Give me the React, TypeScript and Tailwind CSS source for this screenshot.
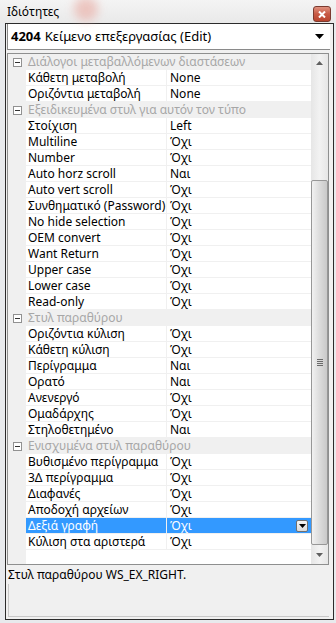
import React from "react";

type Row = { name: string; value?: string; group?: boolean; selected?: boolean };

const rows: Row[] = [
  { name: "Διάλογοι μεταβαλλόμενων διαστάσεων", group: true },
  { name: "Κάθετη μεταβολή", value: "None" },
  { name: "Οριζόντια μεταβολή", value: "None" },
  { name: "Εξειδικευμένα στυλ για αυτόν τον τύπο", group: true },
  { name: "Στοίχιση", value: "Left" },
  { name: "Multiline", value: "Όχι" },
  { name: "Number", value: "Όχι" },
  { name: "Auto horz scroll", value: "Ναι" },
  { name: "Auto vert scroll", value: "Όχι" },
  { name: "Συνθηματικό (Password)", value: "Όχι" },
  { name: "No hide selection", value: "Όχι" },
  { name: "OEM convert", value: "Όχι" },
  { name: "Want Return", value: "Όχι" },
  { name: "Upper case", value: "Όχι" },
  { name: "Lower case", value: "Όχι" },
  { name: "Read-only", value: "Όχι" },
  { name: "Στυλ παραθύρου", group: true },
  { name: "Οριζόντια κύλιση", value: "Όχι" },
  { name: "Κάθετη κύλιση", value: "Όχι" },
  { name: "Περίγραμμα", value: "Ναι" },
  { name: "Ορατό", value: "Ναι" },
  { name: "Ανενεργό", value: "Όχι" },
  { name: "Ομαδάρχης", value: "Όχι" },
  { name: "Στηλοθετημένο", value: "Ναι" },
  { name: "Ενισχυμένα στυλ παραθύρου", group: true },
  { name: "Βυθισμένο περίγραμμα", value: "Όχι" },
  { name: "3Δ περίγραμμα", value: "Όχι" },
  { name: "Διαφανές", value: "Όχι" },
  { name: "Αποδοχή αρχείων", value: "Όχι" },
  { name: "Δεξιά γραφή", value: "Όχι", selected: true },
  { name: "Κύλιση στα αριστερά", value: "Όχι" },
];

const font = { fontFamily: '"Noto Sans", "Liberation Sans", sans-serif' };

function MinusBox() {
  return (
    <div className="w-[9px] h-[9px] border border-[#919191] bg-white flex items-center justify-center">
      <div className="w-[5px] h-[1px] bg-[#333]" />
    </div>
  );
}

function GridRow({ r }: { r: Row }) {
  if (r.group) {
    return (
      <div className="h-[16px] flex items-center bg-[#f0f0f0] shrink-0">
        <div className="w-[18px] h-full flex items-center justify-center pl-[1px]">
          <MinusBox />
        </div>
        <div className="pl-[2px] text-[12px] leading-none text-[#a7a7a7] whitespace-nowrap">{r.name}</div>
      </div>
    );
  }
  return (
    <div className="h-[16px] flex shrink-0">
      <div className="w-[18px] h-full bg-[#f0f0f0]" />
      <div
        className={
          "w-[141px] h-full flex items-center pl-[2px] border-b border-r border-[#f0f0f0] text-[12px] leading-none whitespace-nowrap overflow-hidden " +
          (r.selected ? "bg-[#3399ff] text-white" : "bg-white text-black")
        }
      >
        {r.name}
      </div>
      <div
        className={
          "flex-1 h-full flex items-center pl-[3px] border-b border-[#f0f0f0] text-[12px] leading-none whitespace-nowrap " +
          (r.selected ? "bg-[#3399ff] text-white" : "bg-white text-black")
        }
      >
        <span className="flex-1">{r.value}</span>
        {r.selected && (
          <div className="mr-[3px] w-[12px] h-[12px] rounded-[2px] border border-[#707070] bg-gradient-to-b from-[#f6f6f6] to-[#dadada] flex items-center justify-center">
            <svg width="7" height="4" viewBox="0 0 7 4">
              <path d="M0 0 L7 0 L3.5 4 Z" fill="#000" />
            </svg>
          </div>
        )}
      </div>
    </div>
  );
}

export default function App() {
  return (
    <div
      className="w-[336px] h-[623px] bg-[#e8eaed] flex flex-col overflow-hidden relative"
      style={font}
    >
      {/* title bar */}
      <div className="h-[23px] shrink-0 relative flex items-center pl-[7px] bg-gradient-to-b from-[#f4f4f4] to-[#e9e9e9]">
        <div className="absolute left-[74px] top-[-3px] w-[24px] h-[24px] rounded-full bg-[#e9a9a0] blur-[5px] opacity-60" />
        <span className="relative text-[12px] text-black leading-none">Ιδιότητες</span>
        <div className="absolute right-[5px] top-[6px] w-[18px] h-[16px] rounded-[3px] border border-[#7a3b30] bg-gradient-to-b from-[#e0917f] via-[#c75a45] to-[#b9452f] flex items-center justify-center">
          <svg width="8" height="7" viewBox="0 0 8 7">
            <path d="M1 0.5 L7 6.5 M7 0.5 L1 6.5" stroke="#fff" strokeWidth="2" />
          </svg>
        </div>
      </div>

      {/* body */}
      <div className="flex-1 ml-[5px] mr-[2px] mb-[3px] border border-[#2b2b2b] bg-[#f0f0f0] flex flex-col">
        {/* combo */}
        <div className="h-[26px] shrink-0 ml-[1px] mr-[3px] border-b border-l border-[#8a8a8a] bg-white flex items-center pl-[3px] pr-[6px]">
          <span className="text-[13px] leading-none text-black font-bold">4204</span>
          <span className="text-[13px] leading-none text-black ml-[4px] flex-1">Κείμενο επεξεργασίας (Edit)</span>
          <svg width="9" height="5" viewBox="0 0 9 5">
            <path d="M0 0 L9 0 L4.5 5 Z" fill="#000" />
          </svg>
        </div>

        {/* grid */}
        <div className="mt-[3px] ml-[1px] mr-[4px] h-[512px] shrink-0 border border-[#8e8f8f] bg-white flex">
          <div className="flex-1 flex flex-col">
            {rows.map((r, i) => (
              <GridRow key={i} r={r} />
            ))}
            <div className="flex-1 flex">
              <div className="w-[18px] bg-[#f0f0f0]" />
              <div className="flex-1 bg-white" />
            </div>
          </div>
          {/* scrollbar */}
          <div className="w-[17px] bg-gradient-to-r from-[#e6e6e6] via-[#f2f2f2] to-[#e6e6e6] flex flex-col">
            <div className="h-[17px] flex items-center justify-center">
              <svg width="7" height="4" viewBox="0 0 7 4">
                <path d="M0 4 L7 4 L3.5 0 Z" fill="#606060" />
              </svg>
            </div>
            <div className="h-[109px]" />
            <div className="flex-1 rounded-[2px] border border-[#979797] bg-gradient-to-r from-[#f1f1f1] via-[#dcdcdc] to-[#c9c9c9] flex items-center justify-center">
              <div className="flex flex-col gap-[1px]">
                <div className="w-[6px] h-[1px] bg-[#6a6a6a]" />
                <div className="w-[6px] h-[1px] bg-[#6a6a6a]" />
                <div className="w-[6px] h-[1px] bg-[#6a6a6a]" />
                <div className="w-[6px] h-[1px] bg-[#6a6a6a]" />
              </div>
            </div>
            <div className="h-[19px] flex items-center justify-center">
              <svg width="7" height="4" viewBox="0 0 7 4">
                <path d="M0 0 L7 0 L3.5 4 Z" fill="#606060" />
              </svg>
            </div>
          </div>
        </div>

        {/* description */}
        <div className="flex-1 ml-[1px] mr-[4px] mb-[2px] flex flex-col">
          <div className="pt-[3px] pl-[1px] text-[12px] leading-[14px] text-black">Στυλ παραθύρου WS_EX_RIGHT.</div>
          <div className="flex-1 mt-[2px] ml-[1px] border-l border-b border-[#c8c8c8]" />
        </div>
      </div>
    </div>
  );
}
